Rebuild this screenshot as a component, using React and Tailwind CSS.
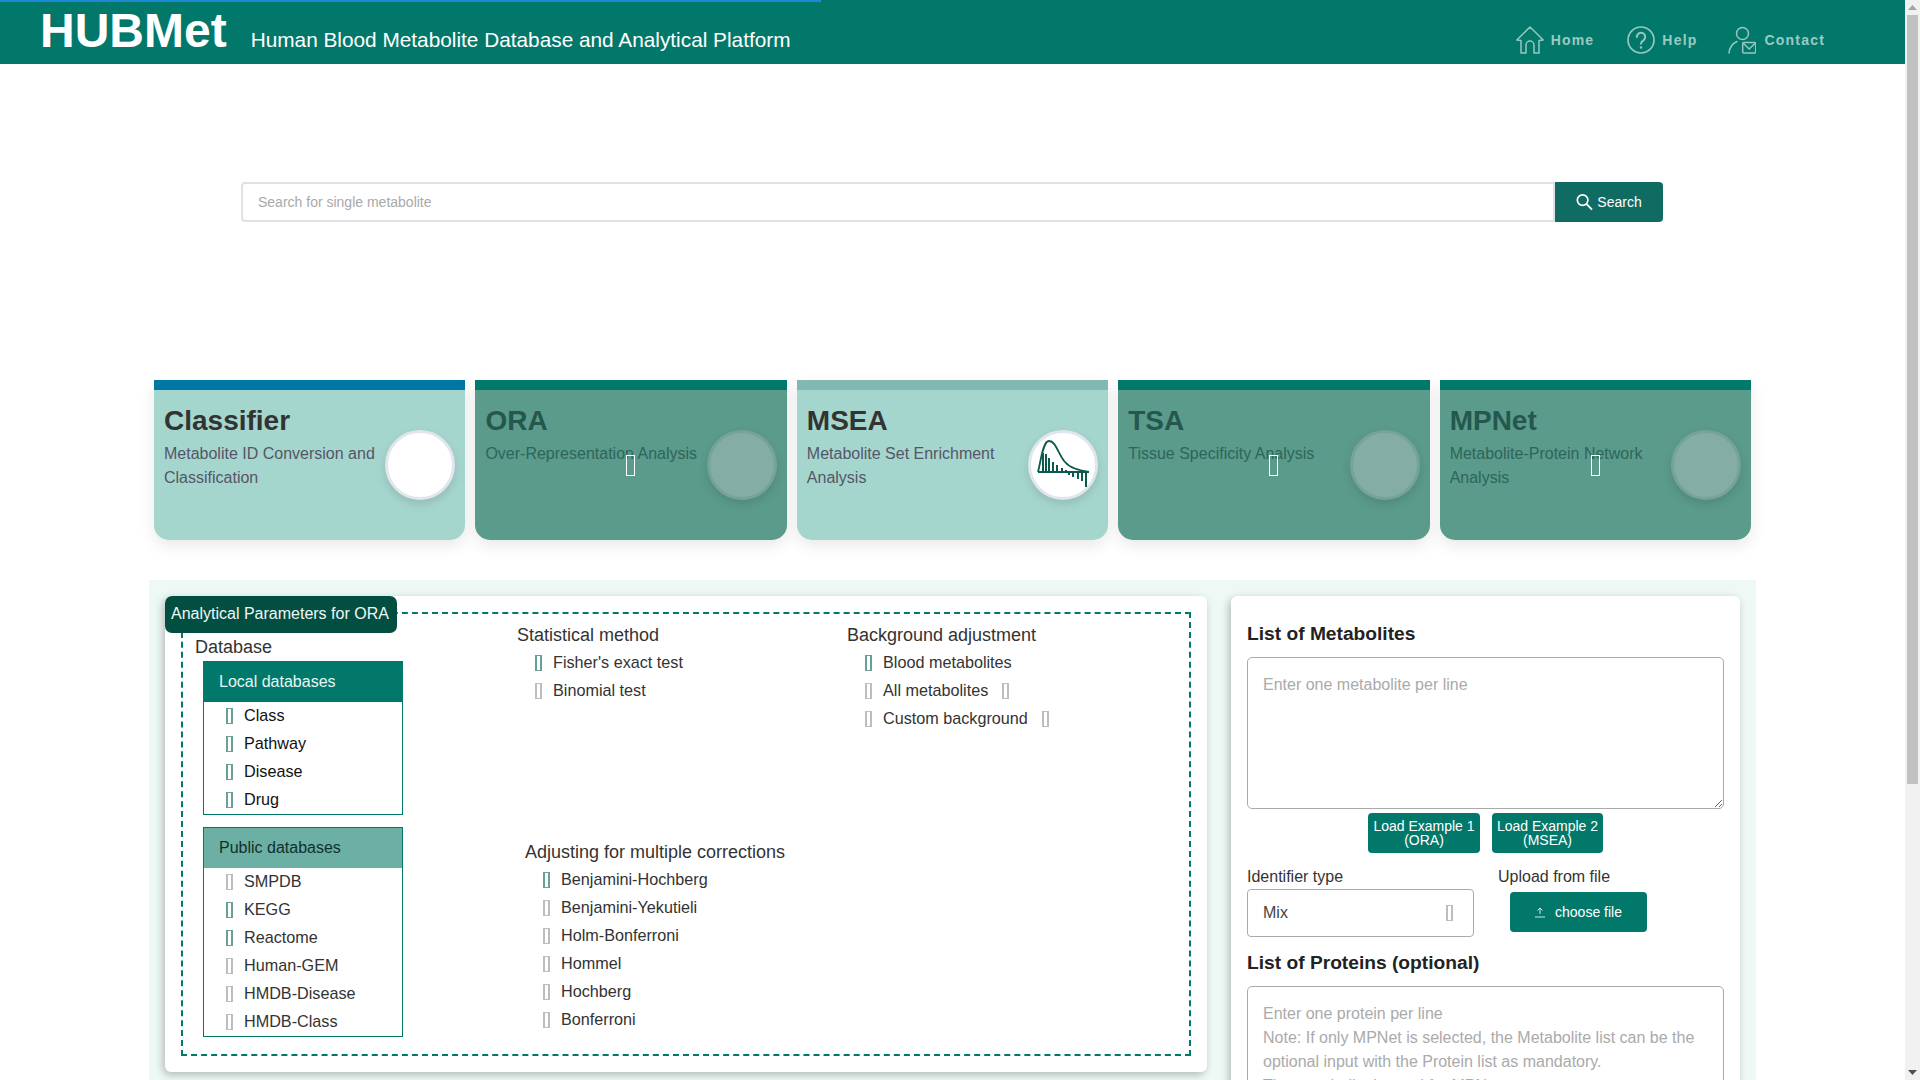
import React from "react";

const Tofu = ({ tone = "off", className = "" }) => (
  <span
    className={`inline-block shrink-0 w-[7px] h-[16px] border-x-2 border-y ${
      tone === "on" ? "border-[#6a9f97]" : "border-[#bdbdbd]"
    } ${className}`}
  />
);

const Row = ({ label, on, after, text = "text-[#333]" }) => (
  <div className={`flex items-center h-7 text-[16.2px] ${text}`}>
    <Tofu tone={on ? "on" : "off"} />
    <span className="ml-[11px] pb-[2px]">{label}</span>
    {after && <Tofu className="ml-[14px]" />}
  </div>
);

const HomeIcon = () => (
  <svg width="28" height="28" viewBox="0 0 28 28" fill="none" stroke="#96c7c0" strokeWidth="1.5" strokeLinejoin="round">
    <path d="M14 1 L0.8 14 L5 14.6 V27 H10 V19 a4 4 0 0 1 8 0 V27 H23 V14.6 L27.2 14 Z" />
  </svg>
);
const HelpIcon = () => (
  <svg width="28" height="28" viewBox="0 0 28 28" fill="none" stroke="#96c7c0" strokeWidth="1.7" strokeLinecap="round">
    <circle cx="14" cy="14" r="13" />
    <path d="M9.8 11 a4.2 4.2 0 1 1 6.6 3.4 c-1.5 1 -2.4 1.8 -2.4 3.4" strokeWidth="2" />
    <circle cx="14" cy="21.5" r="1.2" fill="#96c7c0" stroke="none" />
  </svg>
);
const ContactIcon = () => (
  <svg width="28" height="28" viewBox="0 0 28 28" fill="none" stroke="#96c7c0" strokeWidth="1.5" strokeLinecap="round">
    <circle cx="14.5" cy="7.5" r="6" />
    <path d="M1 27 C1.5 21.5 4.5 17.5 9 15.5" />
    <rect x="14.7" y="16.5" width="13" height="10.5" rx="1" />
    <path d="M15.5 17.5 L21.2 23 L27 17.5" />
  </svg>
);

const MseaIcon = () => {
  const up = [[15, 23], [18, 24], [21, 28], [25, 32], [29, 35], [34, 38], [38, 40]];
  const down = [[41, 45], [45, 47], [50, 49], [54, 51], [58, 57]];
  return (
    <svg viewBox="0 0 70 70" className="absolute inset-[-3px] w-[70px] h-[70px]" fill="none" stroke="#0b5a4d">
      <path d="M10 42 C13 30 15 11 21 11 C28 11 30 24 37 32 C42 38 50 40 61 42" strokeWidth="1.8" />
      <path d="M10 42 H61" strokeWidth="2.2" />
      {up.map(([x, y]) => (
        <path key={x} d={`M${x} 42 V${y}`} strokeWidth="2" />
      ))}
      {down.map(([x, y]) => (
        <path key={x} d={`M${x} 42 V${y}`} strokeWidth="2" />
      ))}
    </svg>
  );
};

const cards = [
  { t: "Classifier", d: "Metabolite ID Conversion and Classification", bar: "bg-[#0077a3]", active: true },
  { t: "ORA", d: "Over-Representation Analysis", bar: "bg-[#00796b]" },
  { t: "MSEA", d: "Metabolite Set Enrichment Analysis", bar: "bg-[#81b9b2]", active: true, icon: true },
  { t: "TSA", d: "Tissue Specificity Analysis", bar: "bg-[#00796b]" },
  { t: "MPNet", d: "Metabolite-Protein Network Analysis", bar: "bg-[#00796b]" },
];

const Card = ({ t, d, bar, active, icon }) => (
  <div
    className={`relative flex-1 h-[160px] rounded-b-[15px] overflow-visible shadow-[0_6px_16px_rgba(0,0,0,0.09)] ${
      active ? "bg-[#a5d6ce]" : "bg-[#5a9b8c]"
    }`}
  >
    <div className={`h-[10px] ${bar}`} />
    <div className="flex pl-[10px] pr-[10px]">
      <div className="flex-1 pt-[14px]">
        <div className={`text-[28px] leading-[34px] font-bold ${active ? "text-[#333]" : "text-[#25574c]"}`}>{t}</div>
        <div className={`mt-[4px] text-[16px] leading-[24px] ${active ? "text-[#555566]" : "text-[#2f6559]"}`}>{d}</div>
      </div>
      <div
        className={`relative shrink-0 w-[70px] h-[70px] mt-[40px] rounded-full border-[3px] shadow-[0_4px_10px_rgba(0,0,0,0.12)] ${
          active ? "bg-white border-[#e1e6ee]" : "bg-[#84ada3] border-[#76a398]"
        }`}
      >
        {icon && <MseaIcon />}
      </div>
    </div>
    {!active && (
      <span className="absolute left-[151px] top-[75px] w-[9px] h-[21px] border border-white" />
    )}
  </div>
);

const DbBox = ({ title, head, items, headText }) => (
  <div className="border border-[#00796b] bg-white">
    <div className={`h-[40px] flex items-center pl-[15px] text-[16px] ${head} ${headText}`}>{title}</div>
    <div className="pl-[22px]">{items}</div>
  </div>
);

export default function App() {
  return (
    <div className="flex h-screen overflow-hidden bg-white font-['Liberation_Sans',Arial,sans-serif]">
      <div className="flex-1 min-w-0 overflow-hidden">
        <header className="relative h-16 bg-[#02786b] flex items-baseline pl-[40px] pt-[7px] pr-[80px] text-white">
          <div className="absolute left-0 top-0 h-[2px] w-[821px] bg-[#1e88d5]" />
          <span className="text-[48px] leading-[48px] font-bold">HUBMet</span>
          <span className="ml-[24px] text-[20.8px]">Human Blood Metabolite Database and Analytical Platform</span>
          <nav className="ml-auto self-start mt-[19px] flex items-center text-[14px] font-bold tracking-[1.2px] text-[#9ccac3]">
            <HomeIcon />
            <span className="ml-[7px]">Home</span>
            <span className="ml-[33px]"><HelpIcon /></span>
            <span className="ml-[7px]">Help</span>
            <span className="ml-[31px]"><ContactIcon /></span>
            <span className="ml-[8px]">Contact</span>
          </nav>
        </header>

        <div className="ml-[241px] mr-[242px] mt-[118px] flex h-[40px]">
          <div className="flex-1 flex items-center border-2 border-[#dee2e6] rounded-l-[4px] pl-[15px] text-[14px] text-[#a9a9a9]">
            Search for single metabolite
          </div>
          <button className="w-[108px] flex items-center justify-center gap-[4px] bg-[#106b63] rounded-r-[4px] text-white text-[14px]">
            <svg width="17" height="18" viewBox="0 0 18 18" fill="none" stroke="white" strokeWidth="1.8">
              <circle cx="7" cy="7" r="5.6" />
              <path d="M11 11 L17 17" strokeWidth="2" />
            </svg>
            Search
          </button>
        </div>

        <div className="mx-[154px] mt-[158px] flex gap-[10px]">
          {cards.map((c) => (
            <Card key={c.t} {...c} />
          ))}
        </div>

        <section className="mx-[149px] mt-[40px] h-[600px] bg-[#eef8f5] flex items-start gap-[24px] pt-[16px] px-[16px]">
          <div className="relative w-[1042px] h-[476px] shrink-0 bg-white rounded-[6px] shadow-[-2px_3px_8px_rgba(0,0,0,0.25)] pt-[16px] pb-[16px] pl-[16px] pr-[16px]">
            <div className="absolute left-0 top-0 w-[232px] h-[37px] flex items-center pl-[6px] pb-[2px] bg-[#024f42] rounded-[7px] text-[16px] text-[#f1f7f5]">
              Analytical Parameters for ORA
            </div>
            <div className="h-[444px] border-2 border-dashed border-[#00796b] flex">
              <div className="w-[334px] shrink-0 pl-[12px] pt-[21px]">
                <div className="text-[18px] leading-[24px] text-[#333]">Database</div>
                <div className="ml-[8px] mt-[2px] w-[200px]">
                  <DbBox
                    title="Local databases"
                    head="bg-[#02786b]"
                    headText="text-[#eaf5f2]"
                    items={["Class", "Pathway", "Disease", "Drug"].map((l) => (
                      <Row key={l} label={l} on text="text-[#111]" />
                    ))}
                  />
                  <div className="h-[12px]" />
                  <DbBox
                    title="Public databases"
                    head="bg-[#6bafa5]"
                    headText="text-[#12302b]"
                    items={["SMPDB", "KEGG", "Reactome", "Human-GEM", "HMDB-Disease", "HMDB-Class"].map((l) => (
                      <Row key={l} label={l} on={l === "KEGG" || l === "Reactome"} />
                    ))}
                  />
                </div>
              </div>
              <div className="flex-1 pt-[9px]">
                <div className="flex h-[109px]">
                  <div className="w-[330px] shrink-0">
                    <div className="text-[18px] leading-[24px] text-[#333]">Statistical method</div>
                    <div className="mt-[2px] ml-[18px]">
                      <Row label="Fisher's exact test" on />
                      <Row label="Binomial test" />
                    </div>
                  </div>
                  <div>
                    <div className="text-[18px] leading-[24px] text-[#333]">Background adjustment</div>
                    <div className="mt-[2px] ml-[18px]">
                      <Row label="Blood metabolites" on />
                      <Row label="All metabolites" after />
                      <Row label="Custom background" after />
                    </div>
                  </div>
                </div>
                <div className="mt-[108px] pl-[8px]">
                  <div className="text-[18px] leading-[24px] text-[#333]">Adjusting for multiple corrections</div>
                  <div className="mt-[2px] ml-[18px]">
                    {["Benjamini-Hochberg", "Benjamini-Yekutieli", "Holm-Bonferroni", "Hommel", "Hochberg", "Bonferroni"].map((l, i) => (
                      <Row key={l} label={l} on={i === 0} />
                    ))}
                  </div>
                </div>
              </div>
            </div>
          </div>

          <div className="flex-1 min-w-0 bg-white rounded-[6px] shadow-[-2px_3px_8px_rgba(0,0,0,0.25)] pt-[26px] px-[16px] h-[600px]">
            <div className="text-[19.2px] leading-[24px] font-bold text-[#222]">List of Metabolites</div>
            <textarea
              readOnly
              className="block mt-[11px] w-full h-[152px] border border-[#aaa] rounded-[5px] pt-[15px] px-[15px] text-[16px] leading-[24px] outline-none placeholder:text-[#aaa]"
              placeholder="Enter one metabolite per line"
            />
            <div className="mt-[4px] ml-[121px] flex gap-[12px]">
              <button className="w-[112px] h-[40px] rounded-[4px] bg-[#02786b] text-white text-[14px] leading-[14px]">
                Load Example 1<br />(ORA)
              </button>
              <button className="w-[111px] h-[40px] rounded-[4px] bg-[#02786b] text-white text-[14px] leading-[14px]">
                Load Example 2<br />(MSEA)
              </button>
            </div>
            <div className="mt-[12px] flex gap-[24px] text-[16px] leading-[24px] text-[#333]">
              <div className="w-[227px]">
                <div>Identifier type</div>
                <div className="h-[48px] border border-[#aaa] rounded-[4px] flex items-center justify-between pl-[15px] pr-[20px] text-[#444]">
                  Mix
                  <Tofu />
                </div>
              </div>
              <div>
                <div>Upload from file</div>
                <button className="mt-[3px] ml-[12px] w-[137px] h-[40px] rounded-[4px] bg-[#02786b] text-white text-[14px] flex items-center justify-center gap-[10px]">
                  <svg width="10" height="11" viewBox="0 0 10 11" fill="none" stroke="#cfe6e2" strokeWidth="1">
                    <path d="M5 7 V1 M2.5 3.5 L5 1 L7.5 3.5 M0 10 H10" />
                  </svg>
                  choose file
                </button>
              </div>
            </div>
            <div className="mt-[14px] text-[19.2px] leading-[24px] font-bold text-[#222]">List of Proteins (optional)</div>
            <textarea
              readOnly
              className="block mt-[11px] w-full h-[200px] border border-[#aaa] rounded-[5px] pt-[15px] px-[15px] text-[16px] leading-[24px] outline-none placeholder:text-[#aaa]"
              placeholder={"Enter one protein per line\nNote: If only MPNet is selected, the Metabolite list can be the optional input with the Protein list as mandatory.\nThe metabolite is used for MPNet"}
            />
          </div>
        </section>
      </div>

      <div className="relative w-[15px] shrink-0 bg-[#f1f1f1]">
        <svg className="absolute left-[3px] top-[5px]" width="9" height="5" viewBox="0 0 9 5"><path d="M4.5 0 L9 5 H0 Z" fill="#a3a3a3" /></svg>
        <div className="absolute left-[2px] top-[15px] w-[11px] h-[769px] bg-[#c1c1c1]" />
        <svg className="absolute left-[3px] bottom-[5px]" width="9" height="5" viewBox="0 0 9 5"><path d="M0 0 H9 L4.5 5 Z" fill="#505050" /></svg>
      </div>
    </div>
  );
}
